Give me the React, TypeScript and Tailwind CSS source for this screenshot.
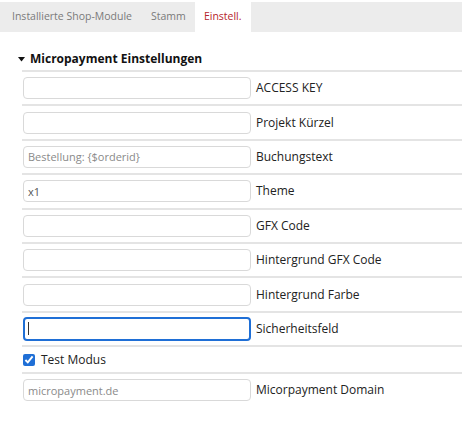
import React from 'react';

const FONT = "font-['Open_Sans','Liberation_Sans',sans-serif]";

const fields: { label: string; value?: string; placeholder?: string; focused?: boolean }[] = [
  { label: 'ACCESS KEY' },
  { label: 'Projekt Kürzel' },
  { label: 'Buchungstext', placeholder: 'Bestellung: {$orderid}' },
  { label: 'Theme', value: 'x1' },
  { label: 'GFX Code' },
  { label: 'Hintergrund GFX Code' },
  { label: 'Hintergrund Farbe' },
  { label: 'Sicherheitsfeld', focused: true },
];

const Divider = () => <div className="h-[2px] bg-[#e4e4e4]" />;

const FieldRow: React.FC<{ label: string; value?: string; placeholder?: string; focused?: boolean }> = ({
  label,
  value,
  placeholder,
  focused,
}) => (
  <div className="flex items-center h-[32.4px] pl-[1px]">
    {focused ? (
      <div className="w-[228px] h-[24px] rounded-[4px] border-2 border-[#1f6fd6] bg-white flex items-center pl-[3px]">
        <div className="w-[1px] h-[13px] bg-[#333]" />
      </div>
    ) : (
      <input
        readOnly
        defaultValue={value}
        placeholder={placeholder}
        className="w-[228px] h-[22px] rounded-[4px] border border-[#d9d9d9] px-[4px] text-[11px] text-[#555] placeholder-[#8a8a8a] outline-none bg-white"
      />
    )}
    <span className="ml-[5px] text-[12px] text-[#222]">{label}</span>
  </div>
);

export default function App() {
  return (
    <div className={`w-[462px] h-[432px] bg-white ${FONT}`}>
      {/* Tabs */}
      <div className="pt-[2px] bg-white">
        <div className="flex h-[30px] bg-[#ececec] items-stretch">
          <div className="pl-[12px] pr-[10px] flex items-center text-[10.5px] text-[#7a7a7a]">
            Installierte Shop-Module
          </div>
          <div className="px-[9px] flex items-center text-[10.5px] text-[#7a7a7a]">Stamm</div>
          <div className="w-[56px] bg-white flex items-center justify-center text-[10.5px] text-[#b5252c]">
            Einstell.
          </div>
        </div>
      </div>

      {/* Section */}
      <div className="pt-[19px] pl-[18px]">
        <div className="flex items-center gap-[5px] h-[16px]">
          <svg width="7" height="5" viewBox="0 0 7 5">
            <path d="M0 0 L7 0 L3.5 4.5 Z" fill="#111" />
          </svg>
          <span className="text-[12px] font-bold text-[#111]">Micropayment Einstellungen</span>
        </div>
      </div>

      <div className="pl-[22px] pt-[3px]">
        <Divider />
        {fields.map(f => (
          <div key={f.label}>
            <FieldRow {...f} />
            <Divider />
          </div>
        ))}
        <div className="flex items-center h-[25px] pl-[1px]">
          <input type="checkbox" defaultChecked className="w-[12px] h-[12px] m-0 accent-[#1f6fd6]" />
          <span className="ml-[6px] text-[12px] text-[#222]">Test Modus</span>
        </div>
        <Divider />
        <FieldRow label="Micorpayment Domain" placeholder="micropayment.de" />
      </div>
    </div>
  );
}
